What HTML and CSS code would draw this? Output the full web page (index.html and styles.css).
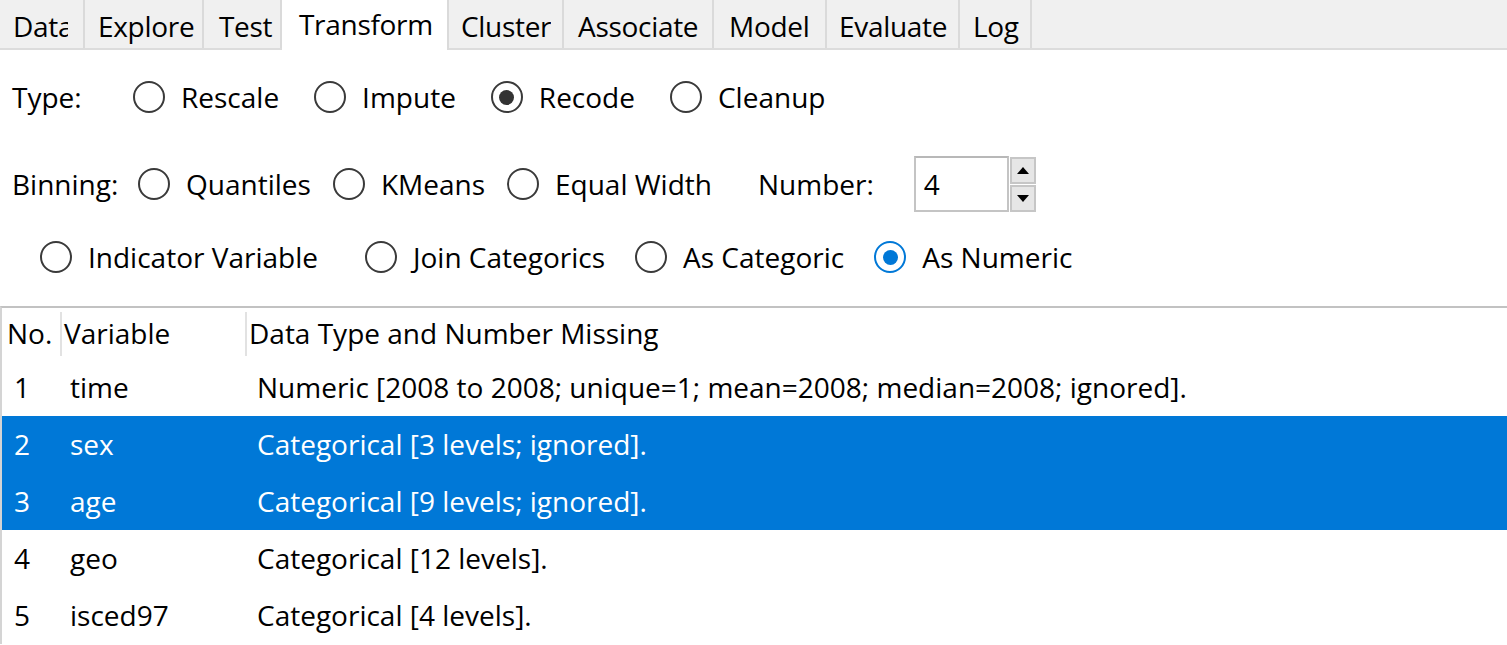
FILE: index.html
```html
<!DOCTYPE html>
<html>
<head>
<meta charset="utf-8">
<link rel="stylesheet" href="styles.css">
</head>
<body>
<div class="tabs">
  <div class="tab clip w-data"><span>Data</span></div>
  <div class="tab w-explore"><span>Explore</span></div>
  <div class="tab w-test"><span>Test</span></div>
  <div class="tab active w-transform"><span>Transform</span></div>
  <div class="tab clip w-cluster"><span>Cluster</span></div>
  <div class="tab w-associate"><span>Associate</span></div>
  <div class="tab w-model"><span>Model</span></div>
  <div class="tab w-evaluate"><span>Evaluate</span></div>
  <div class="tab w-log"><span>Log</span></div>
</div>

<div class="form">
  <div class="row row-type">
    <span class="lbl lbl-type">Type:</span>
    <div class="opts">
      <label class="opt"><span class="radio"></span>Rescale</label>
      <label class="opt"><span class="radio"></span>Impute</label>
      <label class="opt"><span class="radio on"></span>Recode</label>
      <label class="opt"><span class="radio"></span>Cleanup</label>
    </div>
  </div>

  <div class="row row-bin">
    <span class="lbl lbl-bin">Binning:</span>
    <div class="opts opts-bin">
      <label class="opt"><span class="radio"></span>Quantiles</label>
      <label class="opt"><span class="radio"></span>KMeans</label>
      <label class="opt"><span class="radio"></span>Equal Width</label>
    </div>
    <span class="lbl lbl-num">Number:</span>
    <div class="spin">
      <div class="spin-entry">4</div>
      <div class="spin-btns">
        <div class="spin-btn"><span class="tri up"></span></div>
        <div class="spin-btn"><span class="tri down"></span></div>
      </div>
    </div>
  </div>

  <div class="row row-recode">
    <div class="opts opts-recode">
      <label class="opt"><span class="radio"></span>Indicator Variable</label>
      <label class="opt"><span class="radio"></span>Join Categorics</label>
      <label class="opt"><span class="radio"></span>As Categoric</label>
      <label class="opt"><span class="radio blue"></span>As Numeric</label>
    </div>
  </div>
</div>

<div class="table">
  <div class="tr thead">
    <div class="th c1">No.</div>
    <div class="th c2">Variable</div>
    <div class="th c3">Data Type and Number Missing</div>
  </div>
  <div class="tr">
    <div class="td c1">1</div>
    <div class="td c2">time</div>
    <div class="td c3">Numeric [2008 to 2008; unique=1; mean=2008; median=2008; ignored].</div>
  </div>
  <div class="tr sel">
    <div class="td c1">2</div>
    <div class="td c2">sex</div>
    <div class="td c3">Categorical [3 levels; ignored].</div>
  </div>
  <div class="tr sel">
    <div class="td c1">3</div>
    <div class="td c2">age</div>
    <div class="td c3">Categorical [9 levels; ignored].</div>
  </div>
  <div class="tr">
    <div class="td c1">4</div>
    <div class="td c2">geo</div>
    <div class="td c3">Categorical [12 levels].</div>
  </div>
  <div class="tr">
    <div class="td c1">5</div>
    <div class="td c2">isced97</div>
    <div class="td c3">Categorical [4 levels].</div>
  </div>
</div>
</body>
</html>
```

FILE: styles.css
```css
html, body {
  margin: 0;
  padding: 0;
}
body {
  width: 1507px;
  height: 645px;
  overflow: hidden;
  background: #ffffff;
  font-family: "Open Sans", "Noto Sans", sans-serif;
  font-size: 28px;
  color: #000;
}

/* ---------- tabs ---------- */
.tabs {
  display: flex;
  height: 48px;
  background: #f0f0f0;
  border-bottom: 2px solid #dcdcdc;
}
.tab {
  box-sizing: border-box;
  height: 48px;
  line-height: 48px;
  padding: 2px 0 0 13px;
  border-right: 2px solid #dadada;
  white-space: nowrap;
  letter-spacing: -0.3px;
}
.tab span {
  display: block;
}
.tab.clip span {
  overflow: hidden;
}
.tab.active {
  background: #ffffff;
  height: 50px;
  padding: 0 0 0 17px;
  line-height: 48px;
}
.w-data { width: 85px; padding-right: 15px; }
.w-explore { width: 119px; }
.w-test { width: 78px; padding-left: 15px; }
.w-transform { width: 167px; }
.w-cluster { width: 115px; padding-left: 12px; padding-right: 11px; }
.w-associate { width: 150px; padding-left: 14px; }
.w-model { width: 113px; padding-left: 15px; }
.w-evaluate { width: 133px; padding-left: 12px; }
.w-log { width: 72px; }

/* ---------- form ---------- */
.form {
  display: flex;
  flex-direction: column;
  padding-top: 19px;
}
.row {
  display: flex;
  align-items: center;
  height: 56px;
  line-height: 56px;
  white-space: nowrap;
}
.row-bin { margin-top: 31px; }
.row-recode { margin-top: 17px; padding-left: 40px; }

.lbl { display: inline-block; }
.lbl-type { box-sizing: border-box; width: 133px; padding-left: 12px; }
.lbl-bin { box-sizing: border-box; width: 138px; padding-left: 12px; }
.lbl-num { margin-left: 46px; margin-right: 40px; }

.opts { display: flex; gap: 35px; }
.opts-bin { gap: 22px; }
.opts-recode { gap: 30px; }
.opts-recode .opt:first-child { margin-right: 17px; }

.opt {
  display: flex;
  align-items: center;
  gap: 16px;
}
.radio {
  box-sizing: border-box;
  width: 32px;
  height: 32px;
  border-radius: 50%;
  border: 2.5px solid #3a3a3a;
  background: #fff;
  display: flex;
  align-items: center;
  justify-content: center;
  flex: none;
}
.radio.on::after,
.radio.blue::after {
  content: "";
  width: 15px;
  height: 15px;
  border-radius: 50%;
  background: #333;
}
.radio.blue { border-color: #0078d7; }
.radio.blue::after { background: #0078d7; }

/* spin button */
.spin {
  display: flex;
  align-items: center;
  height: 56px;
  gap: 1px;
}
.spin-entry {
  box-sizing: border-box;
  width: 95px;
  height: 56px;
  line-height: 52px;
  border: 2px solid #c4c4c4;
  border-top-color: #b8b8b8;
  padding-left: 8px;
  background: #fff;
}
.spin-btns {
  display: flex;
  flex-direction: column;
  gap: 1px;
}
.spin-btn {
  box-sizing: border-box;
  width: 26px;
  height: 27px;
  background: #e6e6e6;
  border: 2px solid #c6c6c6;
  display: flex;
  align-items: center;
  justify-content: center;
}
.tri {
  width: 0;
  height: 0;
  border-left: 6px solid transparent;
  border-right: 6px solid transparent;
}
.tri.up { border-bottom: 7px solid #000; }
.tri.down { border-top: 7px solid #000; }

/* ---------- table ---------- */
.table {
  margin-top: 21px;
  border-top: 2px solid #c2c2c2;
  border-left: 2px solid #d4d4d4;
}
.tr {
  display: grid;
  grid-template-columns: 58px 185px 1fr;
  height: 57px;
  line-height: 57px;
  white-space: nowrap;
}
.thead {
  height: 51px;
  line-height: 51px;
}
.th.c1 { padding-left: 5px; }
.th.c2, .th.c3 {
  padding-left: 4px;
  background: linear-gradient(#e2e2e2, #e2e2e2) left center / 2px 44px no-repeat;
}
.td.c1 { padding-left: 12px; }
.td.c2 { padding-left: 10px; }
.td.c3 { padding-left: 12px; }
.tr.sel {
  background: #0078d7;
  color: #fff;
}
```
